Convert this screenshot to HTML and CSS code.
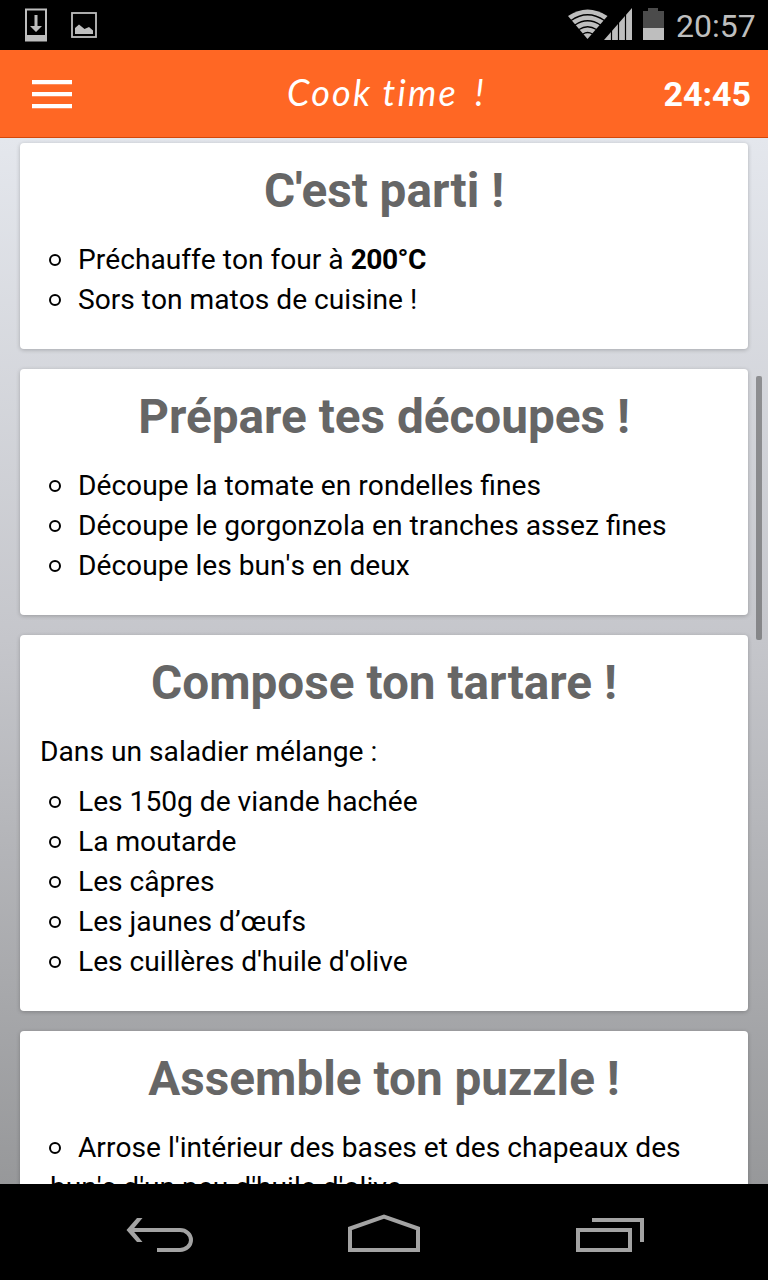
FILE: index.html
```
<!DOCTYPE html>
<html lang="fr">
<head>
<meta charset="utf-8">
<title>Cook time !</title>
<link rel="stylesheet" href="styles.css">
</head>
<body>
<div class="phone">
  <div class="status">
    <svg class="status-left" width="80" height="50" viewBox="20 0 80 50">
      <rect x="26" y="9.500" width="20" height="30" fill="none" stroke="#bebebe" stroke-width="2"/>
      <path fill="#bebebe" d="M25 35h22v6.500H25zM34.500 15h3v11h4.500l-6 6-6-6h4.500z"/>
      <rect x="72" y="13" width="24" height="24" fill="none" stroke="#bebebe" stroke-width="1.800"/>
      <path fill="#bebebe" d="M75 34v-6l4-3.500 5.500 4.500 4.500-2 4 3.500v3.500z"/>
    </svg>
    <div class="status-right">
      <svg width="100" height="50" viewBox="566 0 100 50">
        <path fill="#bebebe" d="M587.500 39L568 16Q587.500 3 607.500 16z"/>
        <path fill="none" stroke="#000" stroke-width="1.300" d="M571 20.500Q587.500 9 604.500 20.500M575 25Q587.500 16.500 600.500 25M579 29.500Q587.500 24 596.500 29.500M583 34Q587.500 31 592.500 34"/>
        <path fill="#bebebe" d="M604 40L632 8v32z"/>
        <path stroke="#000" stroke-width="1.200" d="M611.500 8v33M618.500 8v33M625.500 8v33"/>
        <path fill="#4b4b4b" d="M643 11h5V8h10v3h6v18h-21z"/>
        <path fill="#bebebe" d="M643 28h21v12h-21z"/>
      </svg>
      <span class="clock">20:57</span>
    </div>
  </div>
  <header class="header">
    <div class="menu"><i></i><i></i><i></i></div>
    <h1 class="title">Cook time <span>!</span></h1>
    <span class="timer">24:45</span>
  </header>
  <main class="content">
    <section class="card">
      <h2>C'est parti !</h2>
      <ul>
        <li>Préchauffe ton four à <b>200°C</b></li>
        <li>Sors ton matos de cuisine !</li>
      </ul>
    </section>
    <section class="card">
      <h2>Prépare tes découpes !</h2>
      <ul>
        <li>Découpe la tomate en rondelles fines</li>
        <li>Découpe le gorgonzola en tranches assez fines</li>
        <li>Découpe les bun's en deux</li>
      </ul>
    </section>
    <section class="card">
      <h2>Compose ton tartare !</h2>
      <p>Dans un saladier mélange :</p>
      <ul>
        <li>Les 150g de viande hachée</li>
        <li>La moutarde</li>
        <li>Les câpres</li>
        <li>Les jaunes d’œufs</li>
        <li>Les cuillères d'huile d'olive</li>
      </ul>
    </section>
    <section class="card">
      <h2>Assemble ton puzzle !</h2>
      <ul>
        <li>Arrose l'intérieur des bases et des chapeaux des bun's d'un peu d'huile d'olive</li>
      </ul>
    </section>
    <div class="scrollbar"></div>
  </main>
  <nav class="nav">
    <svg width="768" height="96" viewBox="0 1184 768 96" fill="none" stroke="#a3a3a3" stroke-width="4">
      <path d="M130 1230h50a11 10 0 0 1 0 20h-23"/>
      <path fill="#a3a3a3" stroke="none" d="M126.500 1230l10.500-12h5.500l-10 12 10 12H137z"/>
      <path d="M350 1250v-21.500l34-12 34 12V1250z"/>
      <path d="M578 1230h52v20h-52zM592 1220h50v22"/>
    </svg>
  </nav>
</div>
</body>
</html>
```
FILE: styles.css
```
*, ::before { box-sizing: border-box; }
body { margin: 0; font-family: Roboto, sans-serif; color: #000; }
.phone { width: 768px; height: 1280px; display: flex; flex-direction: column; overflow: hidden; background: #000; }
.status { flex: none; height: 50px; display: flex; justify-content: space-between; padding: 0 12px 0 20px; background: #000; }
.status svg { display: block; }
.status-right { display: flex; gap: 10px; }
.clock { width: 80px; color: #bebebe; font-size: 32px; line-height: 52px; white-space: nowrap; }
.header { flex: none; height: 88px; display: grid; grid-template-columns: 120px 1fr 120px; align-items: center; padding: 0 17px 0 32px; background: #ff6724; border-bottom: 1px solid #d4480b; color: #fff; }
.menu { width: 40px; display: grid; gap: 8px; }
.menu i { height: 4px; background: #fff; box-shadow: 0 1px rgba(255, 255, 255, .25); }
.title { margin: 0 10px 4px 0; text-align: center; font-family: Lato, sans-serif; font-size: 36px; font-style: italic; font-weight: 400; line-height: 48px; letter-spacing: 2.2px; white-space: nowrap; }
.title span { margin-left: 6px; }
.timer { text-align: right; font-size: 34px; font-weight: 700; }
.content { position: relative; flex: 1; min-height: 0; overflow: hidden; display: flex; flex-direction: column; gap: 20px; padding: 5px 20px 0; background: linear-gradient(#e4e7ed, #c5c6cb 48%, #97989a); }
.card { flex: none; padding: 0 20px 29px; border-radius: 4px; background: #fff; box-shadow: 0 1px 4px rgba(0, 0, 0, .23); }
.card h2 { height: 97px; margin: 0; text-align: center; color: #666; font-size: 47.7px; font-weight: 700; line-height: 96px; white-space: nowrap; }
.card p { margin: 0 0 10px; font-size: 28.2px; line-height: 40px; font-kerning: none; }
.card ul { margin: 0; padding: 0 0 0 10px; list-style: none; font-size: 28.15px; line-height: 40px; font-kerning: none; }
.card b { letter-spacing: -.5px; }
.card li::before { content: ""; display: inline-block; width: 12px; height: 12px; margin: 0 17px 3px -1px; border: 2px solid #000; border-radius: 50%; }
.scrollbar { position: absolute; right: 6px; top: 238px; width: 6px; height: 264px; border-radius: 2px; background: rgba(70, 70, 70, .5); }
.nav { flex: none; height: 96px; background: #000; }
.nav svg { display: block; }
```
